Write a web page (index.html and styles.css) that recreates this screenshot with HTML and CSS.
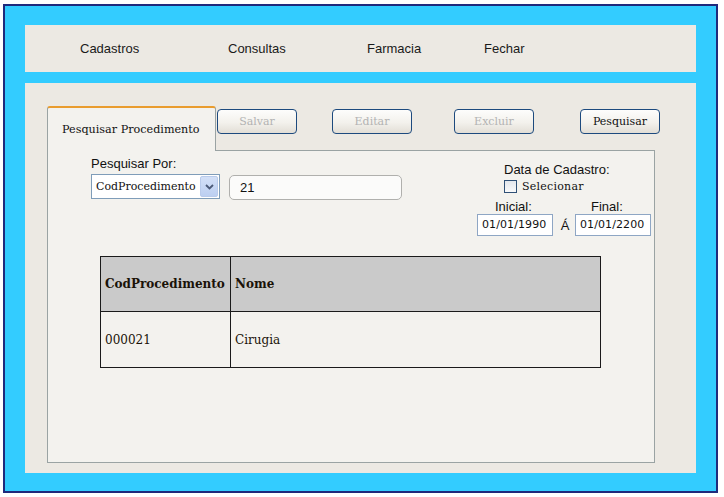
FILE: index.html
```html
<!DOCTYPE html>
<html lang="pt">
<head>
<meta charset="utf-8">
<title>Pesquisar Procedimento</title>
<link rel="stylesheet" href="styles.css">
</head>
<body>
<div class="frame">
  <nav class="menubar">
    <span class="menu-item">Cadastros</span>
    <span class="menu-item">Consultas</span>
    <span class="menu-item">Farmacia</span>
    <span class="menu-item">Fechar</span>
  </nav>
  <main class="main">
    <div class="tabrow">
      <div class="tab">Pesquisar Procedimento</div>
      <div class="toolbar">
        <button class="btn btn-salvar" disabled>Salvar</button>
        <button class="btn btn-editar" disabled>Editar</button>
        <button class="btn btn-excluir" disabled>Excluir</button>
        <button class="btn btn-pesquisar">Pesquisar</button>
      </div>
    </div>
    <section class="panel">
      <div class="filters">
        <div class="search-group">
          <div class="label">Pesquisar Por:</div>
          <div class="search-row">
            <div class="select">
              <span class="select-text">CodProcedimento</span>
              <span class="select-btn">
                <svg width="9" height="6" viewBox="0 0 9 6"><path d="M1 1 L4.5 4.5 L8 1" fill="none" stroke="#4b5a78" stroke-width="1.8"/></svg>
              </span>
            </div>
            <div class="text-input">21</div>
          </div>
        </div>
        <div class="date-group">
          <div class="date-title">Data de Cadastro:</div>
          <div class="check-row">
            <span class="checkbox"></span>
            <span class="check-label">Selecionar</span>
          </div>
          <div class="date-labels">
            <span class="lbl-inicial">Inicial:</span>
            <span class="lbl-final">Final:</span>
          </div>
          <div class="date-inputs">
            <div class="date-input">01/01/1990</div>
            <span class="date-sep">Á</span>
            <div class="date-input">01/01/2200</div>
          </div>
        </div>
      </div>
      <table class="results">
        <thead>
          <tr><th class="col-cod">CodProcedimento</th><th>Nome</th></tr>
        </thead>
        <tbody>
          <tr><td>000021</td><td>Cirugia</td></tr>
        </tbody>
      </table>
    </section>
  </main>
</div>
</body>
</html>
```

FILE: styles.css
```css
body {
  margin: 0;
  background: #ffffff;
}

.frame {
  box-sizing: border-box;
  width: 715px;
  height: 489px;
  margin: 4px 0 0 3px;
  border: 2px solid #1f2a7c;
  background: #33ccff;
  padding: 19px 0 0 20px;
}

.menubar {
  width: 671px;
  height: 47px;
  background: #ece9e3;
  display: grid;
  grid-template-columns: 148px 139px 117px auto;
  align-items: center;
  padding-left: 55px;
  box-sizing: border-box;
  font-family: "Liberation Sans", Arial, sans-serif;
  font-size: 13px;
  color: #1a1a1a;
}

.main {
  box-sizing: border-box;
  width: 671px;
  height: 390px;
  margin-top: 11px;
  background: #ece9e3;
  padding: 23px 0 0 22px;
}

.tabrow {
  display: flex;
  width: 608px;
  height: 45px;
}

.tab {
  box-sizing: border-box;
  flex-shrink: 0;
  width: 169px;
  height: 45px;
  border: 1px solid #9aa3a3;
  border-top: 2px solid #e99c2e;
  border-bottom: none;
  border-radius: 3px 3px 0 0;
  background: #f3f2ee;
  padding: 15px 0 0 14px;
  font-family: "DejaVu Serif", serif;
  font-size: 11.2px;
  color: #111;
  white-space: nowrap;
}

.toolbar {
  box-sizing: border-box;
  flex: 1 1 0;
  min-width: 0;
  height: 45px;
  border-bottom: 1px solid #9aa3a3;
  display: flex;
  align-items: flex-start;
  padding-top: 3px;
}

.btn {
  flex-shrink: 0;
  box-sizing: border-box;
  width: 80px;
  height: 25px;
  margin: 0;
  padding: 0;
  border: 1px solid #1d4a7e;
  border-radius: 4px;
  background: linear-gradient(#fdfdfc, #f3f1ec 55%, #e2ded6);
  font-family: "DejaVu Serif", serif;
  font-size: 11px;
  color: #b3b3b3;
}

.btn-salvar { margin-left: 1px; }
.btn-editar { margin-left: 35px; }
.btn-excluir { margin-left: 42px; }
.btn-pesquisar { margin-left: 46px; color: #111; }

.panel {
  box-sizing: border-box;
  width: 608px;
  height: 312px;
  border: 1px solid #9aa3a3;
  border-top: none;
  background: #f3f2ee;
  padding: 0 3px 0 43px;
}

.filters {
  display: flex;
  align-items: flex-start;
}

.search-group {
  margin-top: 5px;
}

.label,
.date-title,
.date-labels,
.date-sep,
.text-input {
  font-family: "Liberation Sans", Arial, sans-serif;
  font-size: 13px;
  color: #111;
}

.label {
  line-height: 15px;
}

.search-row {
  display: flex;
  align-items: flex-start;
  gap: 9px;
  margin-top: 3px;
}

.select {
  box-sizing: border-box;
  width: 129px;
  height: 25px;
  border: 1px solid #7f9db9;
  background: #fff;
  display: flex;
  align-items: center;
  padding-left: 4px;
  font-family: "DejaVu Serif", serif;
  font-size: 11px;
  color: #111;
}

.select-btn {
  box-sizing: border-box;
  margin-left: auto;
  margin-right: 1px;
  width: 18px;
  height: 21px;
  border: 1px solid #b9cbeb;
  border-radius: 2px;
  background: linear-gradient(#d3e0f7, #bccff1);
  display: flex;
  align-items: center;
  justify-content: center;
}

.text-input {
  box-sizing: border-box;
  width: 173px;
  height: 25px;
  margin-top: 1px;
  border: 1px solid #b0b0ad;
  border-radius: 5px;
  background: #fbfbfa;
  padding-left: 10px;
  line-height: 23px;
}

.date-group {
  margin-left: auto;
  margin-top: 11px;
  width: 174px;
  display: flex;
  flex-direction: column;
}

.date-title {
  padding-left: 27px;
  line-height: 15px;
}

.check-row {
  margin-top: 3px;
  padding-left: 27px;
  height: 13px;
  display: flex;
  align-items: center;
  gap: 5px;
}

.checkbox {
  box-sizing: border-box;
  width: 13px;
  height: 13px;
  border: 1px solid #2f5076;
  background: linear-gradient(#e3e7ec, #f8f9fa);
}

.check-label {
  font-family: "DejaVu Serif", serif;
  font-size: 11px;
  letter-spacing: 0.25px;
  color: #111;
  line-height: 13px;
}

.date-labels {
  margin-top: 6px;
  height: 15px;
  line-height: 15px;
  display: flex;
}

.lbl-inicial {
  box-sizing: border-box;
  width: 98px;
  padding-left: 18px;
}

.lbl-final {
  padding-left: 16px;
}

.date-inputs {
  display: flex;
  align-items: center;
}

.date-input {
  box-sizing: border-box;
  width: 76px;
  height: 22px;
  border: 1px solid #8ea6c4;
  background: #fff;
  padding-left: 4px;
  font-family: "DejaVu Sans", sans-serif;
  font-size: 11px;
  letter-spacing: 0.1px;
  line-height: 20px;
  color: #111;
}

.date-sep {
  width: 22px;
  text-align: center;
  padding-left: 2px;
  box-sizing: border-box;
}

.results {
  margin: 20px 0 0 9px;
  width: 501px;
  border-collapse: collapse;
  font-family: "DejaVu Serif", serif;
  font-size: 12px;
  color: #1a1208;
}

.results th,
.results td {
  border: 1px solid #1a1a1a;
  padding: 0 4px;
  text-align: left;
  vertical-align: middle;
}

.results th {
  height: 54px;
  background: #cacaca;
  font-weight: bold;
}

.results td {
  height: 55px;
}

.results .col-cod {
  width: 121px;
}
```
